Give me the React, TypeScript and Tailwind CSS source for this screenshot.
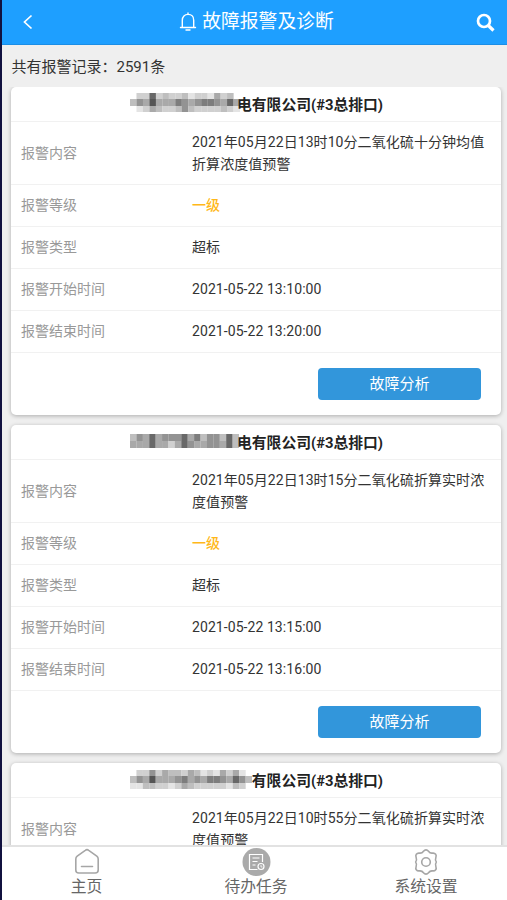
const font = "font-['Roboto','Noto_Sans_CJK_SC',sans-serif]";

const tones: Record<string, string> = {
  '0': 'transparent', '1': '#e4e4e4', '2': '#d0d0d0', '3': '#bebebe', '4': '#a9a9a9',
  '5': '#939393', '6': '#7d7d7d', '7': '#686868', '8': '#555555',
};

type Mosaic = { top: number; heights: number[]; rows: string[]; width: number };
type AlarmRecord = { suffix: string; content: string; details?: { start: string; end: string }; mosaic: Mosaic };

const records: AlarmRecord[] = [
  {
    suffix: '电有限公司(#3总排口)',
    content: '2021年05月22日13时10分二氧化硫十分钟均值折算浓度值预警',
    details: { start: '2021-05-22 13:10:00', end: '2021-05-22 13:20:00' },
    mosaic: { top: 6, heights: [6, 7, 6], rows: ['02272322312214230', '35484446545665474', '01243223532222321'], width: 110 },
  },
  {
    suffix: '电有限公司(#3总排口)',
    content: '2021年05月22日13时15分二氧化硫折算实时浓度值预警',
    details: { start: '2021-05-22 13:15:00', end: '2021-05-22 13:16:00' },
    mosaic: { top: 9, heights: [7, 7], rows: ['35474555746355373', '44474424754455473'], width: 109 },
  },
  {
    suffix: '有限公司(#3总排口)',
    content: '2021年05月22日10时55分二氧化硫折算实时浓度值预警',
    mosaic: { top: 7, heights: [6, 7, 6], rows: ['0225243324312142410', '3548444564546654753', '1133221243222221320'], width: 122 },
  },
];

function Censor({ m }: { m: Mosaic }) {
  const cols = m.rows[0].length;
  const h = m.heights.reduce((a, b) => a + b, 0);
  let y = 0;
  return (
    <svg width={m.width} height={h} viewBox={`0 0 ${cols * 6.5} ${h}`} preserveAspectRatio="none" style={{ marginTop: m.top }} className="shrink-0">
      {m.rows.map((row, r) => {
        const cy = y;
        y += m.heights[r];
        return row.split('').map((c, i) => (
          <rect key={`${r}-${i}`} x={i * 6.5} y={cy} width={6.6} height={m.heights[r]} fill={tones[c]} />
        ));
      })}
    </svg>
  );
}

function Row({ label, value, tall, color = 'text-[#333]' }: { label: string; value: string; tall?: boolean; color?: string }) {
  return (
    <div className={`flex items-center border-b border-[#f1f1f1] pl-[10px] ${tall ? 'h-[63px]' : 'h-[42px]'}`}>
      <div className="w-[171px] shrink-0 text-[#999]">{label}</div>
      <div className={`w-[299px] leading-[22px] tracking-[0.07px] break-all ${tall ? '' : 'pb-px'} ${color}`}>{value}</div>
    </div>
  );
}

function Card({ r }: { r: AlarmRecord }) {
  return (
    <section className="h-[328px] shrink-0 rounded-[5px] bg-white text-[14px] shadow-[0_1px_4px_rgba(0,0,0,0.28)]">
      <div className="flex h-[35px] justify-between border-b border-[#f1f1f1] pr-[118px] pl-[119px]">
        <Censor m={r.mosaic} />
        <h2 className="-ml-[6px] shrink-0 pt-[7px] text-[14.8px] leading-[22px] font-bold whitespace-nowrap text-[#222]">{r.suffix}</h2>
      </div>
      <Row label="报警内容" value={r.content} tall />
      {r.details && (
        <>
          <Row label="报警等级" value="一级" color="text-[#ffb819] font-medium" />
          <Row label="报警类型" value="超标" />
          <Row label="报警开始时间" value={r.details.start} />
          <Row label="报警结束时间" value={r.details.end} />
          <div className="flex justify-end pt-[15px] pr-5">
            <button className="h-8 w-[163px] rounded-[4px] bg-[#3296db] text-[15px] text-white">故障分析</button>
          </div>
        </>
      )}
    </section>
  );
}

export default function App() {
  return (
    <div className={`flex h-[900px] w-[507px] flex-col overflow-hidden border-l-2 border-[#11113f] bg-[#efefef] ${font}`}>
      <header className="flex h-[45px] shrink-0 items-center justify-between border-b border-[#1b8ee6] bg-[#1e9fff] pr-[12px] pl-[20px] text-white">
        <svg width="12" height="18" viewBox="0 0 12 18" fill="none" stroke="currentColor" strokeWidth="1.7"><path d="M9.5 2.5 2.5 9l7 6.500" /></svg>
        <div className="flex items-center gap-[5px] pl-[3px]">
          <svg width="18" height="20" viewBox="0 0 18 20" fill="none" stroke="currentColor" strokeWidth="1.4" strokeLinecap="round" strokeLinejoin="round"><path d="M9 1v1M1.500 15.500h15M3.300 15.500V8.200C3.300 4.600 5.700 2.400 9 2.400s5.700 2.200 5.700 5.800v7.300M7 18h4" /></svg>
          <h1 className="text-[18.8px] leading-7">故障报警及诊断</h1>
        </div>
        <svg width="19" height="20" viewBox="0 0 19 20" fill="none" stroke="currentColor" strokeWidth="2.7"><circle cx="8" cy="9" r="6" /><path d="m12.300 13.500 5.200 5" strokeWidth="3.2" /></svg>
      </header>
      <div className="h-[42px] shrink-0 pt-[11px] pl-[9.500px] text-[15px] leading-[22px] text-[#333]">共有报警记录：2591条</div>
      <main className="flex min-h-0 flex-1 flex-col gap-[10px] overflow-hidden pr-[6px] pl-[9px]">
        {records.map((r) => <Card key={r.content} r={r} />)}
      </main>
      <nav className="grid h-[55px] shrink-0 grid-cols-[169px_170px_170px] border-t-2 border-[#e2e2e2] bg-white text-[15.8px] leading-[22px] text-[#666]">
        <div className="flex flex-col items-center pt-px">
          <svg width="28" height="28" viewBox="0 0 28 28" fill="none" stroke="#a6a6a6" strokeWidth="1.6" strokeLinejoin="round" strokeLinecap="round"><path d="M12.300 2.300 4.200 8.200Q2.800 9.300 2.800 11v11q0 3 3 3h16.400q3 0 3-3V11q0-1.700-1.400-2.800L15.700 2.300q-1.700-1.300-3.400 0ZM8.500 18.500h11" /></svg>
          <span>主页</span>
        </div>
        <div className="flex flex-col items-center pt-px">
          <svg width="29" height="28" viewBox="0 0 29 28" fill="none" stroke="#fff" strokeWidth="1.2"><circle cx="14.500" cy="14" r="14" fill="#aaa" stroke="none" /><path d="M20.500 14V6.500h-13v15h8M10.500 10h7M10.500 13.500h5M10.500 17h3" /><circle cx="19" cy="18.500" r="3" /><path d="M19 17v2h1.500" strokeWidth=".8" /></svg>
          <span>待办任务</span>
        </div>
        <div className="flex flex-col items-center pt-px">
          <svg width="28" height="28" viewBox="0 0 28 28" fill="none" stroke="#a6a6a6" strokeWidth="1.6" strokeLinejoin="round"><path d="M11.500 3.300C13 1.400 15 1.400 16.500 3.300 17.500 4.800 18.800 5.400 20.800 5.100 23.400 4.900 24.800 7 23.900 9.300 23.200 11.200 23.300 12.500 24.300 13.900L24.300 14.100C23.300 15.500 23.200 16.800 23.900 18.700 24.800 21 23.400 23.100 20.800 22.900 18.800 22.600 17.500 23.200 16.500 24.700 15 26.600 13 26.600 11.500 24.700 10.500 23.200 9.200 22.600 7.200 22.900 4.600 23.100 3.200 21 4.100 18.700 4.800 16.800 4.700 15.500 3.700 14.100L3.700 13.900C4.700 12.500 4.800 11.200 4.100 9.300 3.200 7 4.600 4.900 7.200 5.100 9.200 5.400 10.500 4.800 11.500 3.300Z" /><circle cx="14" cy="14" r="4.300" /></svg>
          <span>系统设置</span>
        </div>
      </nav>
    </div>
  );
}
